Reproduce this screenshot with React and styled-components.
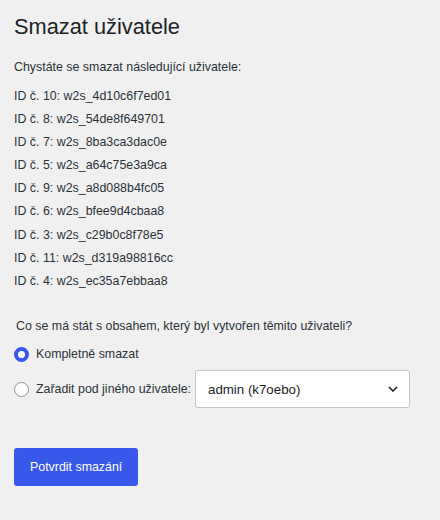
import React, { useState } from "react";
import styled, { createGlobalStyle } from "styled-components";

const Global = createGlobalStyle`
  html, body { margin: 0; padding: 0; background: #f0f0f1; }
  body { font-family: "Liberation Sans", Arial, sans-serif; color: #2c3338; }
  * { box-sizing: border-box; }
`;

const Page = styled.div`
  padding: 13px 14px 20px;
  display: flex;
  flex-direction: column;
`;

const Title = styled.h1`
  margin: 0;
  font-size: 21.8px;
  line-height: 28px;
  font-weight: 400;
  color: #1d2327;
`;

const Text = styled.p`
  margin: ${(p) => p.$mt || 0}px 0 0;
  padding-left: ${(p) => p.$indent || 0}px;
  font-size: 12.4px;
  line-height: 23px;
`;

const List = styled.ul`
  list-style: none;
  margin: 6px 0 0;
  padding: 0;
`;

const Item = styled.li`
  font-size: 12.4px;
  line-height: 23.1px;
`;

const Options = styled.div`
  display: flex;
  flex-direction: column;
  gap: 4.5px;
  margin-top: 5px;
`;

const Row = styled.label`
  display: flex;
  align-items: center;
  gap: 7px;
  font-size: 12.4px;
  min-height: 23px;
`;

const Radio = styled.span`
  width: 15px;
  height: 15px;
  border-radius: 50%;
  flex: none;
  background: #fff;
  border: ${(p) => (p.$checked ? "4px solid #3858e9" : "1px solid #8c8f94")};
`;

const Select = styled.div`
  margin-left: -3px;
  width: 215px;
  height: 38px;
  background: #fff;
  border: 1px solid #c3c4c7;
  border-radius: 3px;
  display: flex;
  align-items: center;
  justify-content: space-between;
  padding: 0 11px 0 12px;
  font-size: 13.3px;
  color: #1d2327;
`;

const Button = styled.button`
  align-self: flex-start;
  margin-top: 40px;
  height: 38px;
  padding: 0 16px;
  background: #3858e9;
  border: none;
  border-radius: 3px;
  color: #fff;
  font-family: "Liberation Sans", Arial, sans-serif;
  font-size: 12.4px;
  cursor: pointer;
`;

const users = [
  [10, "w2s_4d10c6f7ed01"],
  [8, "w2s_54de8f649701"],
  [7, "w2s_8ba3ca3dac0e"],
  [5, "w2s_a64c75e3a9ca"],
  [9, "w2s_a8d088b4fc05"],
  [6, "w2s_bfee9d4cbaa8"],
  [3, "w2s_c29b0c8f78e5"],
  [11, "w2s_d319a98816cc"],
  [4, "w2s_ec35a7ebbaa8"],
];

export default function App() {
  const [choice, setChoice] = useState("delete");
  return (
    <>
      <Global />
      <Page>
        <Title>Smazat uživatele</Title>
        <Text $mt={15}>Chystáte se smazat následující uživatele:</Text>
        <List>
          {users.map(([id, name]) => (
            <Item key={id}>
              ID č. {id}: {name}
            </Item>
          ))}
        </List>
        <Text $mt={22} $indent={2}>
          Co se má stát s obsahem, který byl vytvořen těmito uživateli?
        </Text>
        <Options>
          <Row onClick={() => setChoice("delete")}>
            <Radio $checked={choice === "delete"} />
            Kompletně smazat
          </Row>
          <Row onClick={() => setChoice("reassign")}>
            <Radio $checked={choice === "reassign"} />
            Zařadit pod jiného uživatele:
            <Select>
              <span>admin (k7oebo)</span>
              <svg width="10" height="6" viewBox="0 0 10 6" fill="none">
                <path d="M1 1l4 4 4-4" stroke="#1d2327" strokeWidth="1.6" />
              </svg>
            </Select>
          </Row>
        </Options>
        <Button>Potvrdit smazání</Button>
      </Page>
    </>
  );
}
